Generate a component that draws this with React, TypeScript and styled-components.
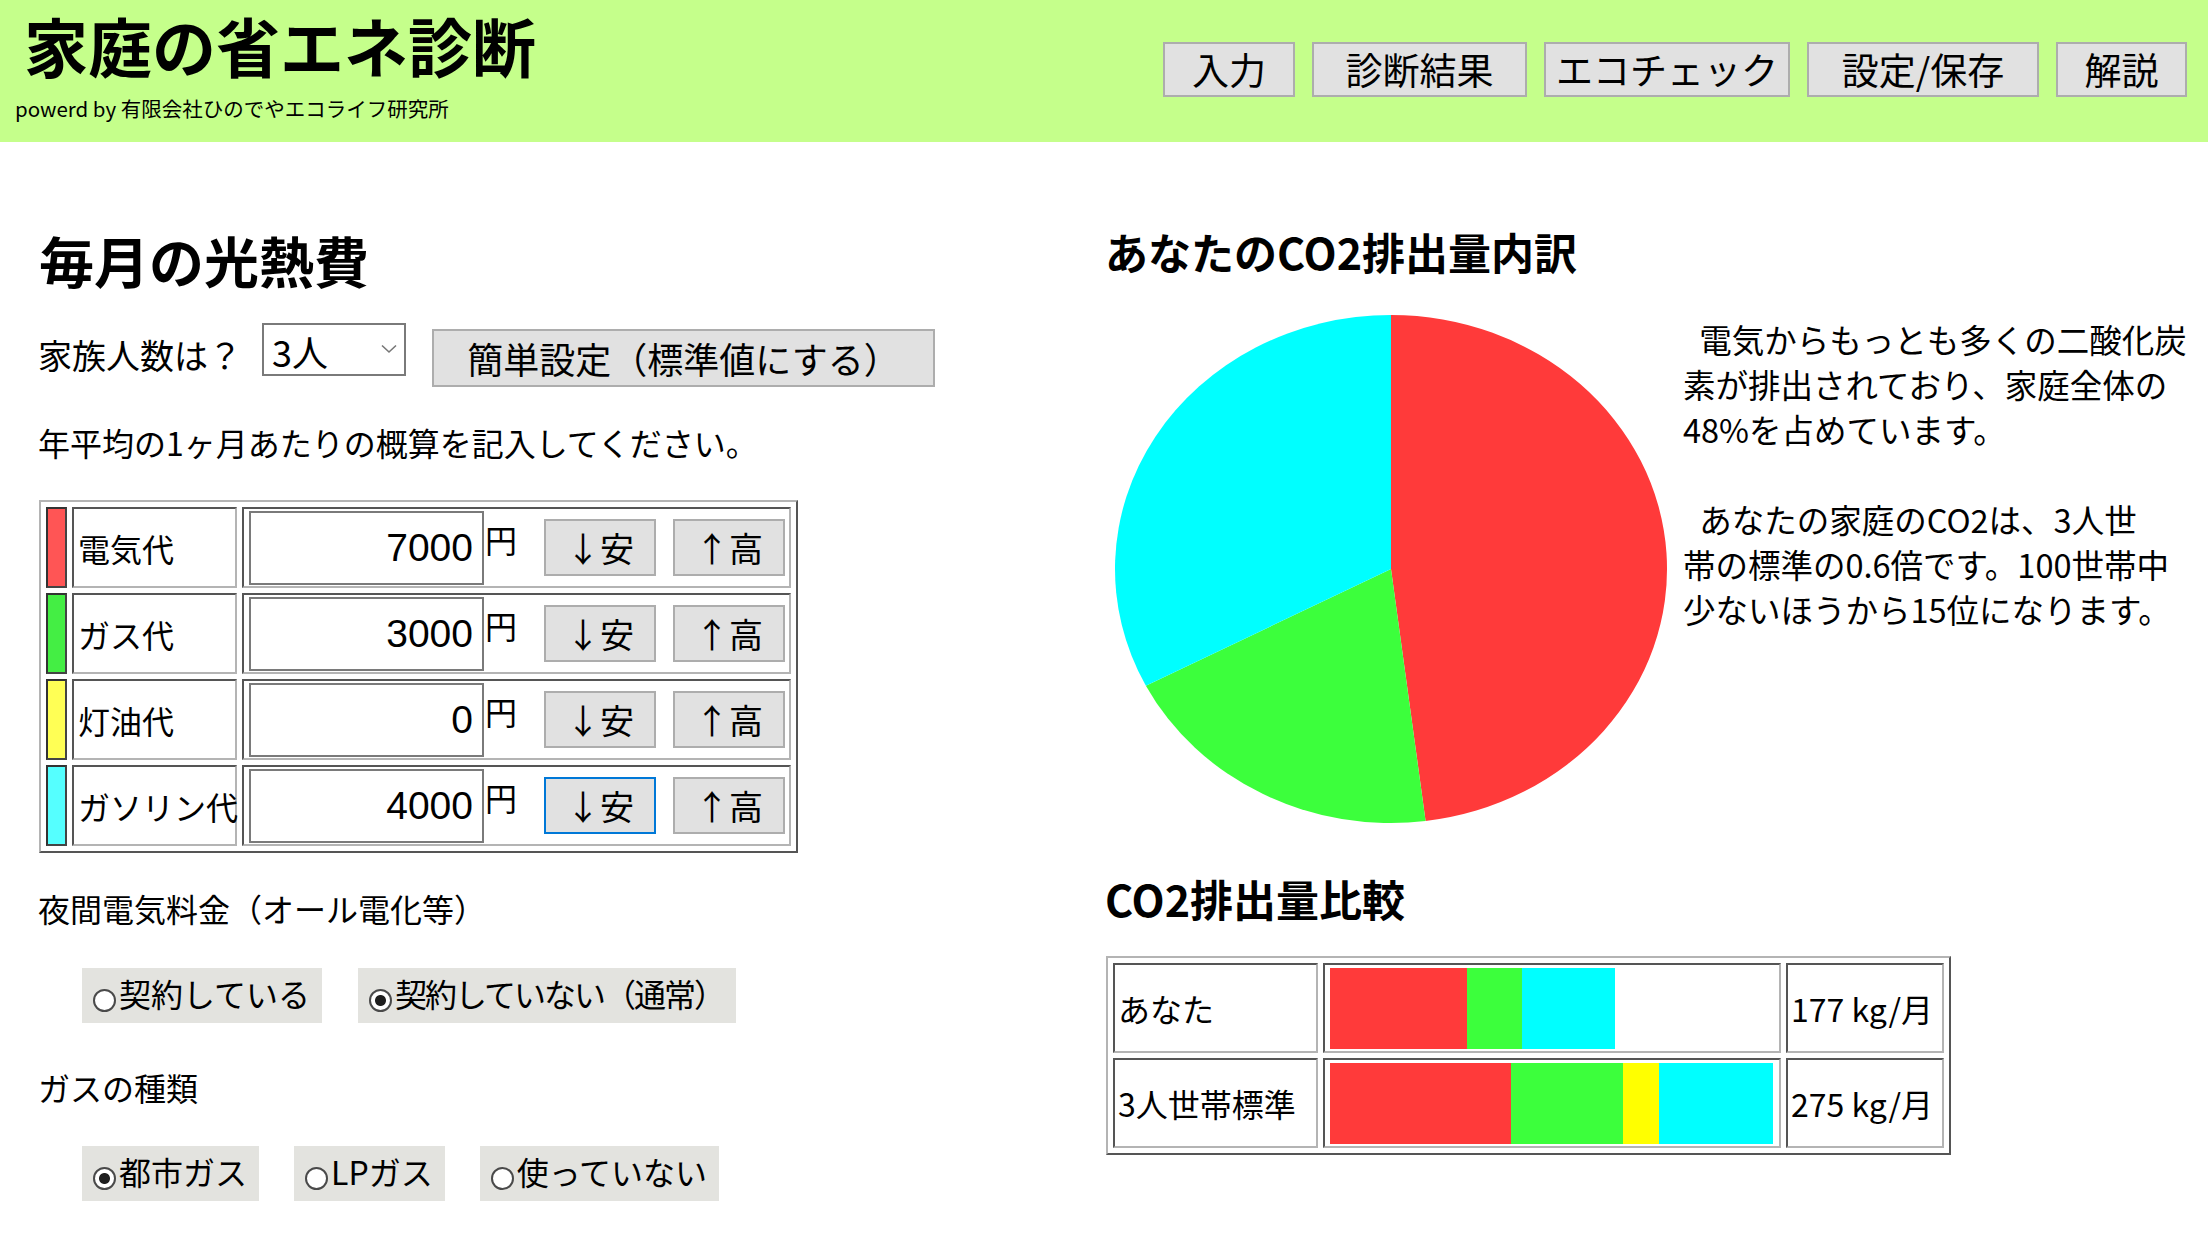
import React from "react";
import styled, { createGlobalStyle } from "styled-components";

const JP = `"Noto Sans CJK JP", "Liberation Sans", sans-serif`;
const INDENT = "\u2002";

const GlobalStyle = createGlobalStyle`
  html, body {
    margin: 0;
    padding: 0;
    background: #fff;
  }
  body {
    font-family: ${JP};
    color: #000;
    width: 2208px;
    height: 1242px;
    overflow: hidden;
  }
`;

const Page = styled.div`
  width: 2208px;
`;

/* ---------- header ---------- */

const Header = styled.header`
  height: 142px;
  box-sizing: border-box;
  background: #c5ff8b;
  display: flex;
  justify-content: space-between;
  align-items: flex-start;
  padding: 13px 21px 0 15px;
`;

const Title = styled.h1`
  margin: 0 0 0 9px;
  font-size: 64px;
  line-height: 62px;
  font-weight: 700;
  white-space: nowrap;
`;

const Credit = styled.div`
  margin-top: 23px;
  font-size: 20.5px;
  line-height: 20px;
  white-space: nowrap;
`;

const Nav = styled.nav`
  display: flex;
  gap: 17px;
  margin-top: 29px;
`;

const NavButton = styled.button<{ $width: number }>`
  width: ${(p) => p.$width}px;
  height: 55px;
  box-sizing: border-box;
  padding: 0;
  background: #e1e1e1;
  border: 2px solid #adadad;
  font-family: ${JP};
  font-size: 37px;
  line-height: 1;
  color: #000;
  white-space: nowrap;
`;

/* ---------- layout ---------- */

const Main = styled.main`
  display: flex;
`;

const LeftCol = styled.section`
  width: 1105px;
  box-sizing: border-box;
  padding-left: 38px;
`;

const RightCol = styled.section`
  flex: 1;
`;

const PageHeading = styled.h2`
  margin: 87px 0 0 1px;
  font-size: 55px;
  line-height: 60px;
  font-weight: 700;
`;

const FamilyRow = styled.div`
  display: flex;
  align-items: flex-start;
  margin-top: 34px;
`;

const FamilyLabel = styled.span`
  margin-top: 15px;
  font-size: 34px;
  line-height: 34px;
`;

const SelectWrap = styled.div`
  position: relative;
  width: 144px;
  height: 53px;
  margin-left: 20px;
`;

const PeopleSelect = styled.select`
  appearance: none;
  width: 100%;
  height: 100%;
  box-sizing: border-box;
  border: 2px solid #7a7a7a;
  border-radius: 0;
  background: #fff;
  padding: 0 0 0 8px;
  font-family: ${JP};
  font-size: 36px;
  color: #000;
  outline: none;
`;

const Chevron = styled.svg`
  position: absolute;
  right: 9px;
  top: 21px;
  pointer-events: none;
`;

const PresetButton = styled.button`
  margin: 6px 0 0 26px;
  width: 503px;
  height: 58px;
  box-sizing: border-box;
  padding: 0;
  background: #e1e1e1;
  border: 2px solid #adadad;
  font-family: ${JP};
  font-size: 36px;
  color: #000;
  white-space: nowrap;
`;

const Note = styled.p<{ $top: number }>`
  margin: ${(p) => p.$top}px 0 0;
  font-size: 32px;
  line-height: 32px;
  white-space: nowrap;
`;

/* ---------- cost table ---------- */

const CostTable = styled.table`
  margin: 42px 0 0 1px;
  border-collapse: separate;
  border-spacing: 5px;
  border: 2px solid;
  border-color: #b4b4b4 #555 #555 #b4b4b4;
  table-layout: fixed;
  width: 759px;
`;

const Cell = styled.td`
  box-sizing: border-box;
  height: 81px;
  padding: 0;
  border: 2px solid;
  border-color: #555 #b4b4b4 #b4b4b4 #555;
  vertical-align: middle;
`;

const SwatchCell = styled(Cell)<{ $color: string }>`
  width: 21px;
  background: ${(p) => p.$color};
  border-color: #333 #444 #444 #333;
`;

const LabelCell = styled(Cell)`
  width: 165px;
  padding-left: 4px;
  font-size: 32px;
  white-space: nowrap;
  overflow: visible;
`;

const InputCell = styled(Cell)`
  width: 549px;
  padding-left: 5px;
`;

const AmountLine = styled.div`
  display: flex;
  align-items: center;
`;

const AmountInput = styled.input`
  width: 235px;
  height: 74px;
  box-sizing: border-box;
  border: 2px solid #7a7a7a;
  padding: 0 9px 0 4px;
  text-align: right;
  font-family: "Liberation Sans", sans-serif;
  font-size: 39px;
  color: #000;
  background: #fff;
  outline: none;
`;

const Yen = styled.span`
  align-self: flex-start;
  margin: 12px 0 0 1px;
  font-size: 32px;
  line-height: 32px;
`;

const StepPair = styled.div`
  display: flex;
  gap: 17px;
  margin-left: 27px;
`;

const StepButton = styled.button<{ $focused?: boolean }>`
  width: 112px;
  height: 57px;
  box-sizing: border-box;
  padding: 0;
  background: #e1e1e1;
  border: 2px solid ${(p) => (p.$focused ? "#0078d7" : "#adadad")};
  font-family: ${JP};
  font-size: 34px;
  color: #000;
  white-space: nowrap;
`;

/* ---------- radios ---------- */

const RadioRow = styled.div<{ $top: number; $gap: number }>`
  display: flex;
  gap: ${(p) => p.$gap}px;
  margin: ${(p) => p.$top}px 0 0 44px;
`;

const RadioBox = styled.label`
  display: flex;
  align-items: center;
  gap: 3px;
  height: 55px;
  box-sizing: border-box;
  padding: 0 12px 0 11px;
  background: #e3e3df;
  font-size: 32px;
  line-height: 32px;
  white-space: nowrap;
`;

const RadioDot = styled.span<{ $checked: boolean }>`
  flex: none;
  width: 23px;
  height: 23px;
  margin-top: 9px;
  box-sizing: border-box;
  border-radius: 50%;
  border: 2px solid #4a4a4a;
  background: ${(p) =>
    p.$checked
      ? "radial-gradient(circle, #1e1e1e 0 5px, #fff 6px)"
      : "#fff"};
`;

const RadioText = styled.span<{ $tight?: boolean }>`
  margin-top: -6px;
  letter-spacing: ${(p) => (p.$tight ? "-2px" : "0")};
`;

/* ---------- right column ---------- */

const ChartHeading = styled.h2<{ $top: number }>`
  margin: ${(p) => p.$top}px 0 0;
  font-size: 43px;
  line-height: 42px;
  font-weight: 700;
  white-space: nowrap;
`;

const PieRow = styled.div`
  display: flex;
  align-items: flex-start;
  margin-top: 41px;
`;

const PieSvg = styled.svg`
  flex: none;
  margin-left: 8px;
`;

const Comment = styled.div`
  margin: 3px 0 0 14px;
  font-size: 32.5px;
  line-height: 45px;
  white-space: nowrap;
`;

const CommentPara = styled.p`
  margin: 0 0 45px;
`;

const CompareTable = styled.table`
  margin: 37px 0 0 1px;
  border-collapse: separate;
  border-spacing: 5px;
  border: 2px solid;
  border-color: #b4b4b4 #555 #555 #b4b4b4;
  table-layout: fixed;
  width: 845px;
`;

const CompareCell = styled.td<{ $width: number }>`
  box-sizing: border-box;
  width: ${(p) => p.$width}px;
  height: 90px;
  padding: 0 0 0 3px;
  border: 2px solid;
  border-color: #555 #b4b4b4 #b4b4b4 #555;
  font-size: 32px;
  white-space: nowrap;
  vertical-align: middle;
`;

const BarCell = styled(CompareCell)`
  padding: 0 5px;
`;

const Bar = styled.div`
  display: flex;
  height: 81px;
`;

const BarPart = styled.div<{ $color: string }>`
  flex: none;
  height: 100%;
  background: ${(p) => p.$color};
`;

/* ---------- data ---------- */

const RED = "#ff3a3a";
const GREEN = "#3cff3c";
const YELLOW = "#ffff00";
const CYAN = "#00ffff";

const navItems = [
  { label: "入力", width: 132 },
  { label: "診断結果", width: 215 },
  { label: "エコチェック", width: 246 },
  { label: "設定/保存", width: 232 },
  { label: "解説", width: 131 },
];

const costs = [
  { label: "電気代", value: 7000, swatch: "#ff5555" },
  { label: "ガス代", value: 3000, swatch: "#44ee44" },
  { label: "灯油代", value: 0, swatch: "#ffff55" },
  { label: "ガソリン代", value: 4000, swatch: "#55ffff" },
];

const pieShares = [
  { share: 48, color: RED },
  { share: 19.4, color: GREEN },
  { share: 0, color: YELLOW },
  { share: 32.6, color: CYAN },
];

const compareRows = [
  { label: "あなた", total: 177, parts: [85, 34, 0, 58] },
  { label: "3人世帯標準", total: 275, parts: [112, 70, 22, 71] },
];
const partColors = [RED, GREEN, YELLOW, CYAN];
const BAR_MAX = 443;
const BAR_MAX_KG = 275;

function PieChart() {
  const w = 556;
  const h = 512;
  const cx = w / 2;
  const cy = h / 2;
  const rx = 276;
  const ry = 254;
  const pt = (deg: number) => {
    const r = (deg * Math.PI) / 180;
    return `${(cx + rx * Math.sin(r)).toFixed(2)} ${(cy - ry * Math.cos(r)).toFixed(2)}`;
  };
  let start = 0;
  const slices = pieShares
    .filter((s) => s.share > 0)
    .map((s, i) => {
      const sweep = (s.share / 100) * 360;
      const d = `M${cx} ${cy} L${pt(start)} A${rx} ${ry} 0 ${sweep > 180 ? 1 : 0} 1 ${pt(
        start + sweep
      )} Z`;
      start += sweep;
      return <path key={i} d={d} fill={s.color} />;
    });
  return (
    <PieSvg width={w} height={h} viewBox={`0 0 ${w} ${h}`}>
      {slices}
    </PieSvg>
  );
}

export default function App() {
  return (
    <Page>
      <GlobalStyle />
      <Header>
        <div>
          <Title>家庭の省エネ診断</Title>
          <Credit>powerd by 有限会社ひのでやエコライフ研究所</Credit>
        </div>
        <Nav>
          {navItems.map((n) => (
            <NavButton key={n.label} $width={n.width}>
              {n.label}
            </NavButton>
          ))}
        </Nav>
      </Header>

      <Main>
        <LeftCol>
          <PageHeading>毎月の光熱費</PageHeading>
          <FamilyRow>
            <FamilyLabel>家族人数は？</FamilyLabel>
            <SelectWrap>
              <PeopleSelect defaultValue="3">
                <option value="1">1人</option>
                <option value="2">2人</option>
                <option value="3">3人</option>
                <option value="4">4人</option>
                <option value="5">5人</option>
              </PeopleSelect>
              <Chevron width="16" height="10" viewBox="0 0 16 10">
                <path d="M1 1.5 L8 8 L15 1.5" fill="none" stroke="#777" strokeWidth="1.6" />
              </Chevron>
            </SelectWrap>
            <PresetButton>簡単設定（標準値にする）</PresetButton>
          </FamilyRow>
          <Note $top={39}>年平均の1ヶ月あたりの概算を記入してください。</Note>

          <CostTable>
            <tbody>
              {costs.map((c, i) => (
                <tr key={c.label}>
                  <SwatchCell $color={c.swatch} />
                  <LabelCell>{c.label}</LabelCell>
                  <InputCell>
                    <AmountLine>
                      <AmountInput defaultValue={String(c.value)} />
                      <Yen>円</Yen>
                      <StepPair>
                        <StepButton $focused={i === costs.length - 1}>↓安</StepButton>
                        <StepButton>↑高</StepButton>
                      </StepPair>
                    </AmountLine>
                  </InputCell>
                </tr>
              ))}
            </tbody>
          </CostTable>

          <Note $top={39}>夜間電気料金（オール電化等）</Note>
          <RadioRow $top={44} $gap={36}>
            <RadioBox>
              <RadioDot $checked={false} />
              <RadioText>契約している</RadioText>
            </RadioBox>
            <RadioBox>
              <RadioDot $checked />
              <RadioText $tight>契約していない（通常）</RadioText>
            </RadioBox>
          </RadioRow>

          <Note $top={48}>ガスの種類</Note>
          <RadioRow $top={43} $gap={35}>
            <RadioBox>
              <RadioDot $checked />
              <RadioText>都市ガス</RadioText>
            </RadioBox>
            <RadioBox>
              <RadioDot $checked={false} />
              <RadioText>LPガス</RadioText>
            </RadioBox>
            <RadioBox>
              <RadioDot $checked={false} />
              <RadioText>使っていない</RadioText>
            </RadioBox>
          </RadioRow>
        </LeftCol>

        <RightCol>
          <ChartHeading $top={88}>あなたのCO2排出量内訳</ChartHeading>
          <PieRow>
            <PieChart />
            <Comment>
              <CommentPara>
                {INDENT}電気からもっとも多くの二酸化炭
                <br />
                素が排出されており、家庭全体の
                <br />
                48%を占めています。
              </CommentPara>
              <CommentPara>
                {INDENT}あなたの家庭のCO2は、3人世
                <br />
                帯の標準の0.6倍です。100世帯中
                <br />
                少ないほうから15位になります。
              </CommentPara>
            </Comment>
          </PieRow>

          <ChartHeading $top={52}>CO2排出量比較</ChartHeading>
          <CompareTable>
            <tbody>
              {compareRows.map((r) => (
                <tr key={r.label}>
                  <CompareCell $width={204}>{r.label}</CompareCell>
                  <BarCell $width={455}>
                    <Bar>
                      {r.parts.map((kg, i) =>
                        kg > 0 ? (
                          <BarPart
                            key={i}
                            $color={partColors[i]}
                            style={{ width: `${(kg / BAR_MAX_KG) * BAR_MAX}px` }}
                          />
                        ) : null
                      )}
                    </Bar>
                  </BarCell>
                  <CompareCell $width={157}>{r.total} kg/月</CompareCell>
                </tr>
              ))}
            </tbody>
          </CompareTable>
        </RightCol>
      </Main>
    </Page>
  );
}
